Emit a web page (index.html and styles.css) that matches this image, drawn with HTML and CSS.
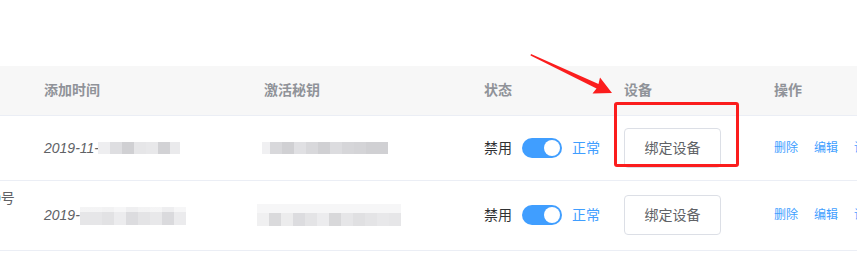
FILE: index.html
```html
<!DOCTYPE html>
<html lang="zh">
<head>
<meta charset="utf-8">
<link rel="stylesheet" href="styles.css">
</head>
<body>
<div class="page">
  <table class="grid">
    <colgroup>
      <col class="c0"><col class="c1"><col class="c2"><col class="c3"><col class="c4"><col class="c5">
    </colgroup>
    <thead>
      <tr>
        <th><div class="cell"></div></th>
        <th><div class="cell">添加时间</div></th>
        <th><div class="cell">激活秘钥</div></th>
        <th><div class="cell">状态</div></th>
        <th><div class="cell">设备</div></th>
        <th><div class="cell">操作</div></th>
      </tr>
    </thead>
    <tbody>
      <tr class="r1">
        <td><div class="cell name"></div></td>
        <td><div class="cell"><span class="date">2019-11-</span><span class="blur b-d1"></span></div></td>
        <td><div class="cell"><span class="blur b-k1"></span></div></td>
        <td><div class="cell sw-cell"><span class="sw-off">禁用</span><span class="switch"><span class="knob"></span></span><span class="sw-on">正常</span></div></td>
        <td><div class="cell"><button class="btn">绑定设备</button></div></td>
        <td><div class="cell ops"><a>删除</a><a>编辑</a><a>详情</a></div></td>
      </tr>
      <tr class="r2">
        <td class="top"><div class="cell name"><span class="dim">0</span>号</div></td>
        <td><div class="cell"><span class="date">2019-</span><span class="blur b-d2"></span></div></td>
        <td><div class="cell"><span class="blur b-k2"></span></div></td>
        <td><div class="cell sw-cell"><span class="sw-off">禁用</span><span class="switch"><span class="knob"></span></span><span class="sw-on">正常</span></div></td>
        <td><div class="cell"><button class="btn">绑定设备</button></div></td>
        <td><div class="cell ops"><a>删除</a><a>编辑</a><a>详情</a></div></td>
      </tr>
    </tbody>
  </table>
  <div class="mark-box"></div>
  <svg class="mark-arrow" width="857" height="253" viewBox="0 0 857 253">
    <polygon points="531,54 598.5,84 600,77.5 612,93 592.5,93.5 596.5,88.5 530.5,55.5" fill="#fb1d1d"/>
  </svg>
</div>
</body>
</html>
```
FILE: styles.css
```css
html, body {
  margin: 0;
  padding: 0;
  background: #fff;
  overflow: hidden;
}
body {
  width: 857px;
  height: 253px;
  font-family: "Liberation Sans", "Noto Sans CJK SC", sans-serif;
  font-size: 14px;
  color: #606266;
}
.page {
  position: relative;
  width: 857px;
  height: 253px;
  padding-top: 66px;
  box-sizing: border-box;
}
.grid {
  border-collapse: collapse;
  table-layout: fixed;
  width: 1064px;
  margin-left: -100px;
}
.c0 { width: 134px; }
.c1 { width: 220px; }
.c2 { width: 220px; }
.c3 { width: 140px; }
.c4 { width: 150px; }
.c5 { width: 200px; }
th, td {
  padding: 12px 0;
  text-align: left;
  vertical-align: middle;
  border-bottom: 1px solid #ebeef5;
}
th {
  background: #f7f7f7;
  color: #909399;
  font-weight: bold;
  padding: 13px 0 13px;
}
.cell {
  padding: 0 10px;
  line-height: 23px;
  white-space: nowrap;
  overflow: hidden;
  display: flex;
  align-items: center;
}
th .cell { display: block; }
.r2 td { padding: 14px 0 15px; }
.r2 td.top { vertical-align: top; padding-top: 6px; }
.name {
  display: block;
  padding: 0 0 0 93px;
  overflow: visible;
  color: #606266;
}
.dim { color: #5a7ab0; }
.date {
  font-style: italic;
  color: #606266;
}
.blur {
  display: inline-block;
}
.b-d1 {
  width: 82px;
  height: 12px;
  margin-left: -1px;
  background: linear-gradient(90deg,
    #eeeef0 0 12px, #dedee1 12px 24px, #d0d0d3 24px 36px, #e6e6e8 36px 48px,
    #e8e8ea 48px 60px, #d2d2d5 60px 72px, #eaeaec 72px 82px);
}
.b-k1 {
  width: 126px;
  height: 12px;
  margin-left: -2px;
  background: linear-gradient(90deg,
    #f0f0f2 0 8px, #d8d8db 8px 20px, #d0d0d3 20px 32px, #e0e0e3 32px 44px,
    #d8d8db 44px 56px, #d0d0d3 56px 68px, #dcdcdf 68px 80px, #d6d6d9 80px 92px,
    #d4d4d7 92px 104px, #d0d0d3 104px 126px);
}
.b-d2 {
  width: 106px;
  height: 18px;
  margin-top: 2px;
  background:
    linear-gradient(180deg, rgba(255,255,255,0.55) 0 5px, transparent 5px),
    linear-gradient(90deg,
      #e6e6e8 0 22px, #e2e2e4 22px 34px, #ececee 34px 46px, #dcdcdf 46px 58px,
      #e4e4e6 58px 70px, #e8e8ea 70px 82px, #dadadd 82px 94px, #ebebed 94px 106px);
}
.b-k2 {
  width: 144px;
  height: 22px;
  margin-left: -7px;
  background:
    linear-gradient(180deg, #f6f6f7 0 9px, transparent 9px),
    linear-gradient(90deg,
      #f0f0f1 0 12px, #dadadc 12px 24px, #ececed 24px 36px, #dcdcdf 36px 48px,
      #e4e4e6 48px 60px, #ececee 60px 72px, #d8d8da 72px 84px, #e6e6e8 84px 96px,
      #e0e0e2 96px 108px, #e4e4e6 108px 120px, #e8e8ea 120px 132px, #e6e6e8 132px 144px);
}
.sw-cell { gap: 10px; }
.sw-off { color: #303133; }
.sw-on { color: #409eff; }
.switch {
  position: relative;
  width: 40px;
  height: 20px;
  border-radius: 10px;
  background: #409eff;
  flex: none;
}
.knob {
  position: absolute;
  top: 2px;
  right: 2px;
  width: 16px;
  height: 16px;
  border-radius: 50%;
  background: #fff;
}
.btn {
  font-family: inherit;
  font-size: 14px;
  color: #606266;
  background: #fff;
  border: 1px solid #dcdfe6;
  border-radius: 4px;
  width: 97px;
  height: 40px;
  padding: 0;
  line-height: 38px;
}
.ops {
  gap: 16px;
  font-size: 12px;
}
.ops a { color: #409eff; }
.mark-box {
  position: absolute;
  left: 614px;
  top: 102px;
  width: 125px;
  height: 65px;
  box-sizing: border-box;
  border: 3px solid #fb1d1d;
  border-radius: 3px;
}
.mark-arrow {
  position: absolute;
  left: 0;
  top: 0;
}
```
